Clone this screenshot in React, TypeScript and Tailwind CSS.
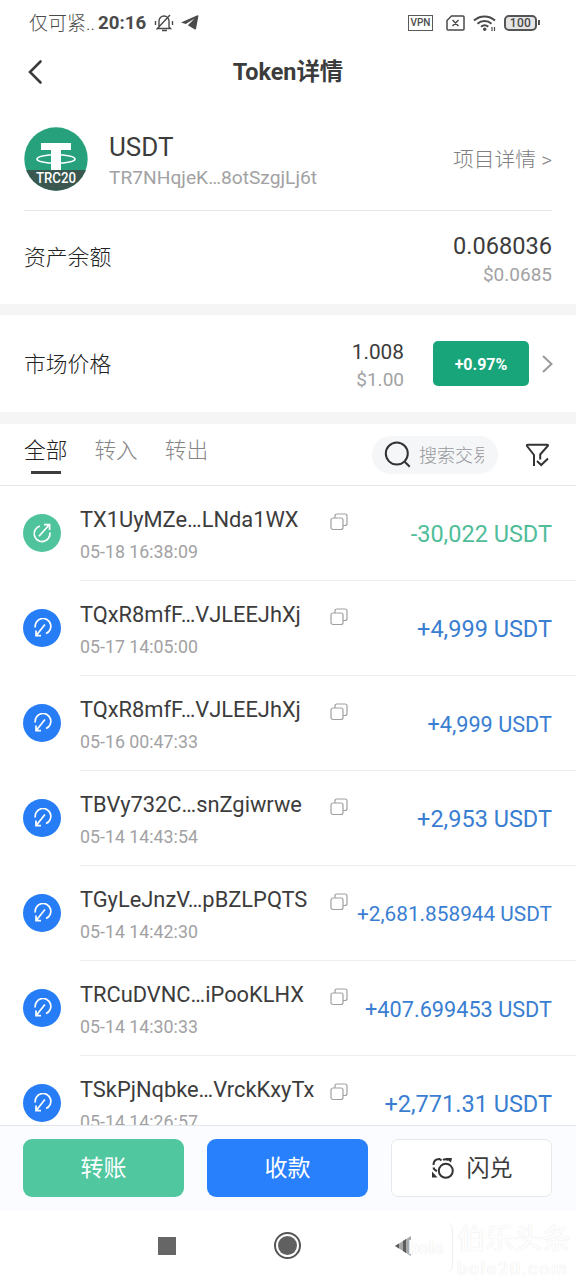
import React, { useState } from 'react';

interface Transaction {
    address: string;
    time: string;
    amount: string;
    type: 'in' | 'out';
    amountClass: string;
}

const transactions: Transaction[] = [
    { address: 'TX1UyMZe…LNda1WX', time: '05-18 16:38:09', amount: '-30,022 USDT', type: 'out', amountClass: 'text-[23.5px]' },
    { address: 'TQxR8mfF…VJLEEJhXj', time: '05-17 14:05:00', amount: '+4,999 USDT', type: 'in', amountClass: 'text-[23.5px]' },
    { address: 'TQxR8mfF…VJLEEJhXj', time: '05-16 00:47:33', amount: '+4,999 USDT', type: 'in', amountClass: 'text-[21.7px]' },
    { address: 'TBVy732C…snZgiwrwe', time: '05-14 14:43:54', amount: '+2,953 USDT', type: 'in', amountClass: 'text-[23.5px]' },
    { address: 'TGyLeJnzV…pBZLPQTS', time: '05-14 14:42:30', amount: '+2,681.858944 USDT', type: 'in', amountClass: 'text-[20.8px]' },
    { address: 'TRCuDVNC…iPooKLHX', time: '05-14 14:30:33', amount: '+407.699453 USDT', type: 'in', amountClass: 'text-[21.7px]' },
    { address: 'TSkPjNqbke…VrckKxyTx', time: '05-14 14:26:57', amount: '+2,771.31 USDT', type: 'in', amountClass: 'text-[23.5px]' },
];

const tabs = ['全部', '转入', '转出'];

const StatusBar: React.FC = () => (
    <div className="flex h-11 items-center justify-between pt-px pl-[29px] pr-9 text-[#4a4a4a]">
        <div className="flex items-center">
            <span className="w-[64px] pt-[3px] text-[19px] whitespace-nowrap font-light">仅可紧..</span>
            <span className="ml-[5px] w-[49px] pt-[2px] text-[18.7px] font-bold whitespace-nowrap">20:16</span>
            <svg className="ml-[7px]" width="20" height="20" viewBox="0 0 20 20" fill="none" stroke="currentColor" strokeWidth="1.4">
                <path d="M5 14V8a5 5 0 0 1 10 0v6l1.5 1.5H3.5zM8 17.5h5M2.5 16.5 16 2M1.5 8v4M18.5 8v4" />
            </svg>
            <svg className="ml-[6px]" width="20" height="17" viewBox="0 0 20 17" fill="currentColor">
                <path d="M1 8.4 17.5 1.2q1-.2.9.8L16.1 14.6q-.4 1.3-1.6.6L7.8 11.2 14.6 4.6 5.8 9.9Z" />
            </svg>
        </div>
        <div className="flex items-center">
            <span className="flex h-4 w-[25px] items-center justify-center border-[1.5px] border-[#5a5a5a] text-[10px] font-medium">VPN</span>
            <svg className="ml-[13px]" width="19" height="16" viewBox="0 0 19 16" fill="none" stroke="currentColor" strokeWidth="1.5">
                <path d="M5.5 1H17q1 0 1 1v12q0 1-1 1H2q-1 0-1-1V5.5ZM6.5 5l6 6M12.5 5l-6 6" />
            </svg>
            <svg className="ml-2" width="24" height="18" viewBox="0 0 24 18" fill="none" stroke="currentColor" strokeWidth="2">
                <path d="M1 6.5a15.5 15.5 0 0 1 21 0M4.5 9.7a10.5 10.5 0 0 1 14 0M8 12.8a5.7 5.7 0 0 1 7.3-.2" />
                <circle cx="11.7" cy="15.3" r="1.7" fill="currentColor" stroke="none" />
                <path d="M19 13v4M21.5 13v4" strokeWidth="1.2" />
            </svg>
            <span className="ml-[7px] flex h-4 w-[33px] items-center justify-center rounded-[5px] border-2 border-[#555] bg-[#e5e5e5] text-[12px] font-medium tracking-[0.3px]">100</span>
            <span className="ml-px h-[5px] w-[2px] bg-[#555]" />
        </div>
    </div>
);

const TokenLogo: React.FC = () => (
    <svg width="64" height="64" viewBox="0 0 64 64">
        <clipPath id="logo">
            <circle cx="32" cy="32" r="31.7" />
        </clipPath>
        <g clipPath="url(#logo)">
            <rect width="64" height="64" fill="#26a17b" />
            <path d="M17 16H47V23H37V44H27V23H17Z" fill="#fff" />
            <ellipse cx="32" cy="32" rx="19" ry="4.3" fill="none" stroke="#fff" strokeWidth="1.6" />
            <rect y="43" width="64" height="21" fill="#3a5850" />
        </g>
        <text x="32" y="56" textAnchor="middle" fill="#fff" fontSize="15" fontWeight="500" textLength="40" lengthAdjust="spacingAndGlyphs">TRC20</text>
    </svg>
);

const DirectionIcon: React.FC<{ type: 'in' | 'out' }> = ({ type }) => (
    <span className={`flex size-[38px] shrink-0 items-center justify-center rounded-full ${type === 'out' ? 'bg-[#4fc49c]' : 'bg-[#267df5]'}`}>
        {type === 'out' ? (
            <svg width="20" height="20" viewBox="0 0 20 20" fill="none" stroke="#fff" strokeWidth="1.7">
                <path d="M8 3A7.9 7.9 0 1 0 17.9 9.5M7 13.3 17 2M12 1.6H17.6V7" />
            </svg>
        ) : (
            <svg width="20" height="20" viewBox="0 0 20 20" fill="none" stroke="#fff" strokeWidth="1.7">
                <path d="M3.3 9.5A7.8 7.8 0 1 1 14 15.5M12.9 6.5 4.6 17M4 12.5V17.7H9" />
            </svg>
        )}
    </span>
);

const CopyIcon: React.FC = () => (
    <svg width="18" height="18" viewBox="0 0 18 18" fill="none" stroke="#a0a0a0" strokeWidth="1.2">
        <rect x="1" y="5" width="12" height="11.5" rx="2" />
        <path d="M5 5V3Q5 1 7 1H15Q17 1 17 3V10.5Q17 12.5 15 12.5H13" />
    </svg>
);

const App: React.FC = () => {
    const [activeTab, setActiveTab] = useState('全部');

    return (
        <div className="flex h-[1280px] w-[576px] flex-col overflow-hidden bg-white font-['Roboto','Noto_Sans_CJK_SC',sans-serif] text-[#3c3c3c]">
            <StatusBar />

            <header className="grid h-14 grid-cols-3 items-center px-6">
                <svg width="24" height="26" viewBox="0 0 24 26" fill="none" stroke="#3c3c3c" strokeWidth="2.6" strokeLinecap="round">
                    <path d="M16.5 2.5 6 13 16.5 23.5" />
                </svg>
                <h1 className="flex justify-center pt-[2px] text-[23.4px] font-bold whitespace-nowrap">Token详情</h1>
            </header>

            <section className="mx-6 flex h-[111px] shrink-0 items-center border-b border-[#e8e8e8] pt-[7px]">
                <TokenLogo />
                <div className="ml-[21px] flex-1 pt-[6px]">
                    <div className="text-[26px] leading-[32px]">USDT</div>
                    <div className="text-[19.2px] leading-[29px] text-[#a2a2a4]">TR7NHqjeK…8otSzgjLj6t</div>
                </div>
                <span className="pt-[4px] text-[20.8px] font-light text-[#808082]">项目详情 &gt;</span>
            </section>

            <section className="flex h-[93px] shrink-0 items-center justify-between px-6">
                <span className="pt-[2px] text-[21.8px] font-light text-[#222]">资产余额</span>
                <div className="pt-[3px] text-right">
                    <div className="text-[23.6px] leading-[30px]">0.068036</div>
                    <div className="text-[19px] leading-[27px] text-[#a2a2a4]">$0.0685</div>
                </div>
            </section>

            <div className="h-[11px] shrink-0 bg-[#f5f5f5]" />

            <section className="flex h-[97px] shrink-0 items-center pl-6 pr-[23px]">
                <span className="flex-1 pt-[4px] text-[21.8px] font-light text-[#222]">市场价格</span>
                <div className="pt-[4px] text-right">
                    <div className="text-[20.8px] leading-[27px]">1.008</div>
                    <div className="text-[19px] leading-[27px] text-[#a2a2a4]">$1.00</div>
                </div>
                <span className="ml-[29px] flex h-[45px] w-[96px] items-center justify-center rounded-[5px] bg-[#19a57a] pt-[2px] text-[16px] font-bold text-white">+0.97%</span>
                <svg className="ml-3" width="12" height="20" viewBox="0 0 12 20" fill="none" stroke="#999" strokeWidth="2">
                    <path d="M2 2 10.5 10 2 18" />
                </svg>
            </section>

            <div className="h-3 shrink-0 bg-[#f5f5f5]" />

            <div className="flex h-[62px] shrink-0 items-center border-b border-[#e8e8ea] pl-6 pr-[26px]">
                <div className="flex h-full flex-1 gap-[27px] pt-[10px]">
                    {tabs.map(tab => (
                        <button
                            key={tab}
                            onClick={() => setActiveTab(tab)}
                            className={`flex flex-col items-center text-[21.7px] leading-[34px] font-light ${activeTab === tab ? 'text-[#222]' : 'text-[#858587]'}`}
                        >
                            {tab}
                            {activeTab === tab && <span className="mt-[3px] h-[3px] w-[30px] bg-[#3c3c3c]" />}
                        </button>
                    ))}
                </div>
                <div className="flex h-[38px] w-[126px] items-center rounded-full bg-[#f5f6f8] pl-3">
                    <svg className="shrink-0" width="28" height="28" viewBox="0 0 28 28" fill="none" stroke="#333" strokeWidth="2">
                        <circle cx="12.8" cy="12.6" r="11" />
                        <path d="M20.5 20.5 25.7 25.7" />
                    </svg>
                    <span className="ml-[7px] w-[65px] overflow-hidden pt-[2px] text-[18px] font-light whitespace-nowrap text-[#96989c]">搜索交易</span>
                </div>
                <svg className="ml-[27px]" width="25" height="26" viewBox="0 0 25 26" fill="none" stroke="#333" strokeWidth="2">
                    <path d="M9 24V13L2 4Q1.3 2.8 3 2.8H22Q23.5 2.8 22.8 4L15.2 12.5V17.5M12 19 16.2 23 23 16.5" />
                </svg>
            </div>

            <main className="min-h-0 flex-1 overflow-hidden pl-[23px]">
                {transactions.map(tx => (
                    <div key={tx.time} className="flex h-[95px] items-center">
                        <div className="pb-[2px]">
                            <DirectionIcon type={tx.type} />
                        </div>
                        <div className="ml-[19px] flex h-full flex-1 items-center border-b border-[#ededee] pr-6">
                            <div className="w-[252px] shrink-0 pt-[5px]">
                                <div className="text-[21.85px] leading-[32px] whitespace-nowrap">{tx.address}</div>
                                <div className="text-[17.8px] leading-[32px] text-[#a2a2a4]">{tx.time}</div>
                            </div>
                            <div className="-mt-[22px] -ml-[2px] shrink-0">
                                <CopyIcon />
                            </div>
                            <div className={`flex flex-1 justify-end pt-[4px] whitespace-nowrap ${tx.amountClass} ${tx.type === 'out' ? 'text-[#50bd9a]' : 'text-[#3a7ed2]'}`}>
                                {tx.amount}
                            </div>
                        </div>
                    </div>
                ))}
            </main>

            <footer className="flex h-[86px] shrink-0 gap-[23px] border-t border-[#e3e6eb] bg-[#fafcff] pr-6 pl-[23px] pt-[13px] text-[23px]">
                <button className="h-[58px] w-[161px] rounded-[9px] bg-[#50c79f] pt-[3px] text-white">转账</button>
                <button className="h-[58px] w-[161px] rounded-[9px] bg-[#2880fd] pt-[3px] text-white">收款</button>
                <button className="flex h-[58px] w-[161px] items-center justify-center gap-[12px] rounded-[7px] border-[1.5px] border-[#e6e8ec] bg-white">
                    <svg width="24" height="24" viewBox="0 0 24 24" fill="none" stroke="#333" strokeWidth="2">
                        <circle cx="14.8" cy="14.8" r="7" />
                        <path d="M2.5 9Q2.5 3 8.5 3L10.5 4.5M12 4Q14 2.5 17 4M2.5 11.5Q3 14 6 15" />
                        <path d="M14 2 21 2 20 6.5ZM1 15.5 6.5 21.5H1Z" fill="#333" stroke="none" />
                    </svg>
                    <span className="pt-[3px]">闪兑</span>
                </button>
            </footer>

            <nav className="relative h-[69px] shrink-0">
                <div className="flex h-full items-center pl-[158px]">
                    <span className="size-[18px] bg-[#666]" />
                    <span className="ml-[98px] flex size-[27px] items-center justify-center rounded-full border-2 border-[#555]">
                        <span className="size-[19px] rounded-full bg-[#606060]" />
                    </span>
                    <svg className="ml-[93px]" width="18" height="20" viewBox="0 0 18 20">
                        <path d="M1 10 17 0V20Z" fill="#a8a8a8" />
                        <path d="M1 10 5 7.5V12.5ZM9 5 12 3V17L9 15Z" fill="#5c5c5c" />
                    </svg>
                </div>
                <div className="absolute top-[11px] left-[400px] flex gap-1 text-[#fdfdfd] [text-shadow:0_0_1px_#ddd]">
                    <div className="flex h-[51px] w-[53px] items-center justify-center rounded-lg border-r border-[#eee] text-[18px] font-bold">bole</div>
                    <div className="flex flex-col whitespace-nowrap">
                        <span className="text-[28.5px] leading-[36px] font-medium">伯乐头条</span>
                        <span className="text-[18px] leading-[22px] font-medium tracking-[1.6px]">bole20.com</span>
                    </div>
                </div>
            </nav>
        </div>
    );
};

export default App;
